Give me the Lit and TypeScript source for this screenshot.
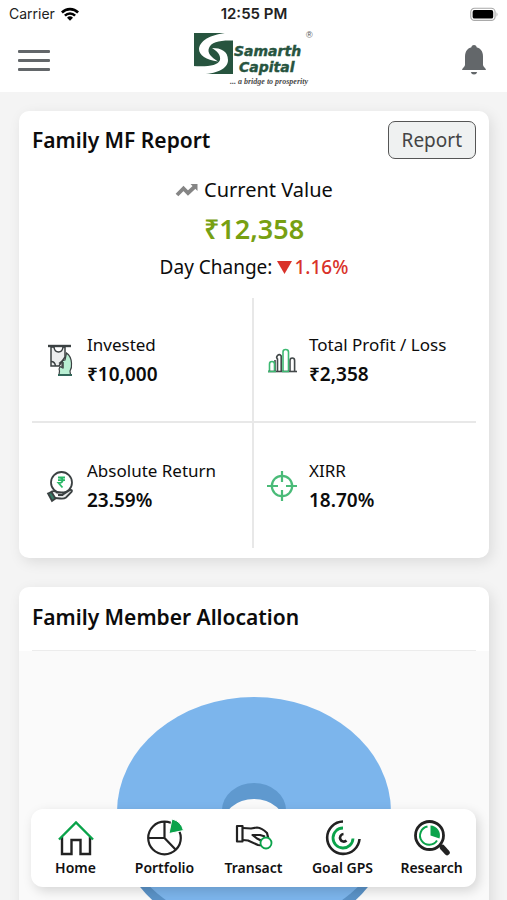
import { LitElement, html, css, svg } from "lit";
import { customElement } from "lit/decorators.js";

const wifi = svg`<svg class="wifi" viewBox="0 0 18 14" aria-hidden="true">
  <path d="M0 4.6 A12.6 12.6 0 0 1 18 4.6 L16.2 6.5 A10 10 0 0 0 1.8 6.5 Z"/>
  <path d="M3 7.7 A8.4 8.4 0 0 1 15 7.7 L13.2 9.6 A5.9 5.9 0 0 0 4.8 9.6 Z"/>
  <path d="M6 10.8 A4.3 4.3 0 0 1 12 10.8 L9 13.8 Z"/></svg>`;

const battery = svg`<svg class="battery" viewBox="0 0 31 15" aria-hidden="true">
  <rect x=".8" y=".8" width="26" height="13" rx="4" fill="#fff" stroke="#a9a9a9" stroke-width="1.2"/>
  <rect x="2.8" y="2.8" width="22" height="9" rx="2" fill="#000"/>
  <path d="M28.4 5 Q30.4 7.3 28.4 9.8 Z" fill="#a9a9a9"/></svg>`;

const bell = svg`<svg viewBox="0 0 26 32" fill="#63676a" aria-hidden="true">
  <circle cx="13" cy="3.500" r="2.600"/>
  <path d="M13 3 C7 3 4 7 4 12.500 V21 C4 22.600 1 24.200 1 26 H25 C25 24.200 22 22.600 22 21 V12.500 C22 7 19 3 13 3Z"/>
  <path d="M9.800 28 H16.200 Q15.600 30.600 13 30.600 Q10.400 30.600 9.800 28Z"/></svg>`;

const logo = svg`<svg viewBox="0 0 122 58" role="img" aria-label="Samarth Capital">
  <rect x="2" y="2" width="39" height="41" fill="#27543f"/>
  <path d="M37 1.500 C22 3 8 8 7 18 C7 24 14 29 26 30.500 C19 26 15 22 17 17 C19 11 28 9 41 9.500 V1Z" fill="#fff"/>
  <path d="M20 17 C29 17 36 20 36 29 C36 38 24 43 8 43.500 H1 V35 C14 36 26 35 28 29 C29 24 25 20 20 17Z" fill="#fff"/>
  <text class="brand" x="42" y="25">Samarth</text>
  <text class="brand" x="47" y="41">Capital</text>
  <text class="tag" x="38" y="53">... a bridge to prosperity</text>
  <text class="reg" x="114" y="7">®</text></svg>`;

const trend = svg`<svg class="trend" viewBox="0 0 24 14" aria-hidden="true">
  <path d="M2 12 L8.500 5.500 L13 10 L20 3.500" fill="none" stroke="#858585" stroke-width="3.800"/>
  <path d="M15.500 1 H22.500 V8Z" fill="#858585"/></svg>`;

const invested = svg`<svg viewBox="0 0 30 34" fill="none" stroke="#3b4142" stroke-width="1.500" aria-hidden="true">
  <path d="M6 4 H20 V14 L14 23 H6Z" fill="#eceeee"/>
  <path d="M6 18.500 Q10 18.500 10.500 23"/>
  <path d="M9 4 Q9.500 9 13.500 9 Q17.500 9 18 4" fill="#fff"/>
  <path d="M14 32 L14.500 28 Q13.500 26 15 23.500 L17 24.500 V20 Q17 17 20 17 L21.500 10 Q26 13 26.500 20 Q27 25 25 28 L25.500 32Z" fill="#b9efd3" stroke-width="1.200"/>
  <path d="M14 20.500 L19 16.500 M18 25.500 V19"/>
  <path d="M13 32 H27" stroke="#32675a" stroke-width="2"/>
  <path d="M3 3 H26" stroke-width="2.400"/></svg>`;

const profit = svg`<svg viewBox="0 0 30 34" fill="none" stroke-width="1.600" aria-hidden="true">
  <path d="M8 28 V17 M10.500 28 V16 Q8.800 14.600 10.500 12.500 Q12.500 10.500 14.200 13 V28 M23 28 V17.500 Q23 15 25.300 15 Q27.600 15 27.600 17.500 V28" stroke="#43494a"/>
  <path d="M2.500 28 V21 Q2.500 18.500 5 18.500 Q7.500 18.500 7.500 21 V28 M16 28 V9 Q16 6.500 18.500 6.500 Q21.500 6.500 21.500 9 V28" stroke="#3db972"/>
  <path d="M1 28.500 H30" stroke="#43494a"/><path d="M1 28.500 H9 M15 28.500 H22" stroke="#3db972"/></svg>`;

const returns = svg`<svg viewBox="0 0 30 34" fill="none" stroke="#3b4142" stroke-width="1.800" aria-hidden="true">
  <circle cx="16.500" cy="13.500" r="10.500"/>
  <path d="M13 8.500 H20 M13 11.200 H20 M14 8.500 C19 8.500 19 14 13.500 14 L17.500 18.500" stroke="#28b866" stroke-width="1.800"/>
  <path d="M6 23 Q9 21 12 23.500 H17 Q19.500 24 17.500 26 H13 M18 25.500 L25 21 Q28 20.500 26.500 23 L21 28.500 Q19 30 15 29.500 L10 29" fill="#e8eaea"/>
  <path d="M3 24.500 L6.500 23 L10.500 29.500 L7 32Z" fill="#377b66"/></svg>`;

const target = svg`<svg viewBox="0 0 30 34" fill="none" stroke="#4abb78" stroke-width="2.200" aria-hidden="true">
  <circle cx="15" cy="17" r="10.200"/>
  <path d="M15 2 V13 M15 21 V32 M0 17 H11 M19 17 H30"/></svg>`;

const icons = {
  home: svg`<svg viewBox="0 0 38 38" fill="none" stroke="#222" stroke-width="2.400" aria-hidden="true">
    <path d="M5 18 V35 H14.500 V21 H23.500 V35 H33 V18"/>
    <path d="M2 20.500 L19 3.500 L36 20.500" stroke="#0aa34a"/></svg>`,
  portfolio: svg`<svg viewBox="0 0 38 38" fill="none" stroke="#222" stroke-width="2.200" aria-hidden="true">
    <circle cx="18.500" cy="19" r="16.300"/><path d="M18.500 2.500 V19 H2 M18.500 19 L30 31"/>
    <path d="M23 14.500 L26 0 Q35 2 37.500 11.500Z" fill="#0aa34a" stroke="#fff" stroke-width="1"/></svg>`,
  transact: svg`<svg viewBox="0 0 38 38" fill="none" stroke="#222" stroke-width="2.200" stroke-linejoin="round" aria-hidden="true">
    <path d="M2 7 H7.500 V22.500 H2Z"/>
    <path d="M8 9 L16 9.500 L22 8.500 Q27 9 32 14 L33.500 20"/>
    <path d="M8 21 L13 21.500 L23 26 L27 26.500"/>
    <path d="M30 17.500 L25 16 L17.500 16 L22 19.500 L26 21.500"/>
    <circle cx="31" cy="24" r="5.500" fill="#fff" stroke="#0aa34a" stroke-width="1.800"/></svg>`,
  goal: svg`<svg viewBox="0 0 38 38" fill="none" stroke="#222" stroke-width="2.600" aria-hidden="true">
    <path d="M19 2.500 A16.200 16.200 0 1 0 35.500 20"/>
    <path d="M19 9 A10 10 0 1 0 29 19.500" stroke="#0aa34a" stroke-width="2.800"/>
    <path d="M19.500 15 A3.800 3.800 0 1 0 22.500 21.500"/></svg>`,
  research: svg`<svg viewBox="0 0 38 38" fill="none" stroke="#222" aria-hidden="true">
    <path d="M26.500 25.500 L30 29" stroke-width="2.500"/><path d="M29.500 28.500 L34 33.500" stroke-width="5.500" stroke-linecap="round"/>
    <circle cx="16.500" cy="16.500" r="14" stroke-width="2.800"/>
    <path d="M14.500 7.500 A9.200 9.200 0 1 0 24 21.500" stroke="#0aa34a" stroke-width="2"/>
    <path d="M17.500 16.500 V6.500 A10 10 0 0 1 26.500 19.500Z" fill="#0aa34a" stroke="none"/></svg>`,
};

const metrics = [
  { label: "Invested", value: "₹10,000", icon: invested },
  { label: "Total Profit / Loss", value: "₹2,358", icon: profit },
  { label: "Absolute Return", value: "23.59%", icon: returns },
  { label: "XIRR", value: "18.70%", icon: target },
];

const tabs = [
  { label: "Home", icon: icons.home },
  { label: "Portfolio", icon: icons.portfolio },
  { label: "Transact", icon: icons.transact },
  { label: "Goal GPS", icon: icons.goal },
  { label: "Research", icon: icons.research },
];

@customElement("app-root")
export class AppRoot extends LitElement {
  static styles = css`
    :host {
      display: flex;
      flex-direction: column;
      position: relative;
      height: 100vh;
      overflow: hidden;
      background: #f4f4f4;
      color: #0c0c0c;
      font-family: "Noto Sans", "Open Sans", sans-serif;
    }
    * { box-sizing: border-box; }
    h2, p, dl, dd { margin: 0; }
    svg { display: block; }
    .top { background: #fff; flex: none; }
    .status {
      display: grid;
      grid-template-columns: 1fr auto 1fr;
      align-items: center;
      height: 28px;
      padding: 0 8px 0 9px;
      font: 14px/28px Inter, sans-serif;
      color: #222;
    }
    .carrier { display: flex; align-items: center; gap: 6px; }
    .wifi { width: 18px; height: 14px; fill: #000; }
    .clock { font-size: 15px; font-weight: 600; }
    .battery { width: 29px; height: 15px; justify-self: end; }
    .header {
      display: grid;
      grid-template-columns: 1fr auto 1fr;
      align-items: center;
      height: 64px;
      padding: 0 20px 0 18px;
    }
    .icon-button { border: 0; padding: 0; background: none; }
    .menu { display: grid; gap: 6px; width: 32px; }
    .bar { height: 3px; background: #63676a; border-radius: 1px; }
    .bell { width: 26px; height: 32px; justify-self: end; }
    .logo { width: 122px; height: 58px; }
    .brand {
      font: italic 700 14px "DejaVu Sans", sans-serif;
      fill: #27543f;
      stroke: #27543f;
      stroke-width: 0.4;
    }
    .tag { font: italic 700 8px "Liberation Serif", serif; fill: #4a4a4a; }
    .reg { font: 9px "Liberation Sans", sans-serif; fill: #555; }
    .content {
      flex: 1;
      min-height: 0;
      overflow-y: auto;
      scrollbar-width: none;
      padding: 19px 18px 120px 19px;
      display: flex;
      flex-direction: column;
      gap: 29px;
    }
    .card {
      flex: none;
      background: #fff;
      border-radius: 10px;
      box-shadow: 3px 4px 14px rgba(0, 0, 0, 0.1);
      overflow: hidden;
    }
    .report { padding: 10px 13px; }
    .card-head { display: flex; justify-content: space-between; align-items: center; }
    .title { font-size: 21px; line-height: 37px; font-weight: 600; }
    .report-button {
      height: 38px;
      padding: 0 13px;
      border: 1px solid #555;
      border-radius: 7px;
      background: #eff1f1;
      color: #444;
      font: 19px/36px "Noto Sans", sans-serif;
    }
    .summary { display: grid; justify-items: center; padding: 11px 0 11px; }
    .line { display: flex; align-items: center; gap: 5px; line-height: 39px; font-size: 20px; }
    .trend { width: 24px; height: 14px; }
    .amount { font-size: 27px; font-weight: 600; line-height: 39px; color: #77a012; }
    .change { font-size: 19px; }
    .down { display: flex; align-items: center; gap: 2px; color: #d9322a; font-weight: 500; }
    .arrow { width: 15px; height: 13px; fill: #d9322a; }
    .metrics { display: grid; grid-template-columns: 1fr 1fr; }
    .metric { display: flex; align-items: center; gap: 12px; height: 125px; padding-left: 13px; }
    .metric:nth-child(odd) { border-right: 2px solid #e8e8e8; }
    .metric:nth-child(-n + 2) { border-bottom: 2px solid #e8e8e8; }
    .metric-icon { width: 30px; height: 34px; }
    .metric dt { font-size: 17px; line-height: 28px; }
    .metric dd { font-size: 19px; line-height: 30px; font-weight: 600; }
    .alloc-head { margin: 0 13px; padding: 12px 0 14px; border-bottom: 1px solid #ececec; }
    .chart { background: #fafafa; }
    .tabs {
      position: absolute;
      left: 31px;
      right: 31px;
      bottom: 13px;
      display: grid;
      grid-template-columns: repeat(5, 1fr);
      padding: 10px 0 9px;
      background: #fff;
      border-radius: 12px;
      box-shadow: 3px 4px 12px rgba(0, 0, 0, 0.15);
    }
    .tab {
      display: grid;
      justify-items: center;
      gap: 1px;
      color: #111;
      text-decoration: none;
      font-size: 14px;
      font-weight: 600;
      line-height: 20px;
    }
    .tab-icon { width: 38px; height: 38px; }
  `;

  render() {
    return html`
      <header class="top">
        <div class="status">
          <span class="carrier">Carrier ${wifi}</span>
          <span class="clock">12:55 PM</span>
          ${battery}
        </div>
        <div class="header">
          <button class="icon-button menu" aria-label="Menu">
            <span class="bar"></span><span class="bar"></span><span class="bar"></span>
          </button>
          <div class="logo">${logo}</div>
          <button class="icon-button bell" aria-label="Notifications">${bell}</button>
        </div>
      </header>

      <main class="content">
        <section class="card report">
          <div class="card-head">
            <h2 class="title">Family MF Report</h2>
            <button class="report-button">Report</button>
          </div>
          <div class="summary">
            <p class="line">${trend}<span>Current Value</span></p>
            <p class="amount">₹12,358</p>
            <p class="line change">
              <span>Day Change:</span>
              <span class="down"><svg class="arrow" viewBox="0 0 15 13"><path d="M0 0H15L7.500 13Z"/></svg>1.16%</span>
            </p>
          </div>
          <div class="metrics">
            ${metrics.map((m) => html`
              <div class="metric">
                <div class="metric-icon">${m.icon}</div>
                <dl><dt>${m.label}</dt><dd>${m.value}</dd></dl>
              </div>`)}
          </div>
        </section>

        <section class="card">
          <div class="alloc-head"><h2 class="title">Family Member Allocation</h2></div>
          <svg class="chart" viewBox="0 0 470 330" role="img" aria-label="Family member allocation chart">
            <path d="M98 161 V172 A137 115 0 0 0 372 172 V161Z" fill="#5b93c8"/>
            <ellipse cx="235" cy="161" rx="137" ry="115" fill="#7cb5ec"/>
            <clipPath id="hole"><ellipse cx="235" cy="159" rx="32" ry="27"/></clipPath>
            <ellipse cx="235" cy="159" rx="32" ry="27" fill="#5f99cf"/>
            <ellipse cx="235" cy="175" rx="32" ry="27" fill="#fafafa" clip-path="url(#hole)"/>
          </svg>
        </section>
      </main>

      <nav class="tabs">
        ${tabs.map((t) => html`
          <a class="tab" href="#"><span class="tab-icon">${t.icon}</span>${t.label}</a>`)}
      </nav>
    `;
  }
}
